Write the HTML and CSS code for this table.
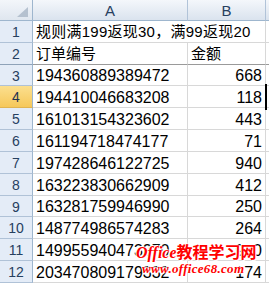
FILE: index.html
```html
<!DOCTYPE html>
<html>
<head>
<meta charset="utf-8">
<link rel="stylesheet" href="styles.css">
</head>
<body>
<div class="sheet">
  <div class="grid">
    <div class="corner"><span class="tri"></span></div>
    <div class="colhead">A</div>
    <div class="colhead">B</div>
    <div class="colhead rest"></div>

    <div class="rowhead">1</div>
    <div class="cell text span2 title">规则满199返现30，满99返现20</div>
    <div class="cell rest"></div>

    <div class="rowhead r2">2</div>
    <div class="cell text r2">订单编号</div>
    <div class="cell text r2">金额</div>
    <div class="cell rest r2"></div>

    <div class="rowhead">3</div><div class="cell num">194360889389472</div><div class="cell num right">668</div><div class="cell rest"></div>
    <div class="rowhead sel">4</div><div class="cell num">194410046683208</div><div class="cell num right">118</div><div class="cell rest"></div>
    <div class="rowhead">5</div><div class="cell num">161013154323602</div><div class="cell num right">443</div><div class="cell rest"></div>
    <div class="rowhead">6</div><div class="cell num">161194718474177</div><div class="cell num right">71</div><div class="cell rest"></div>
    <div class="rowhead">7</div><div class="cell num">197428646122725</div><div class="cell num right">940</div><div class="cell rest"></div>
    <div class="rowhead">8</div><div class="cell num">163223830662909</div><div class="cell num right">412</div><div class="cell rest"></div>
    <div class="rowhead">9</div><div class="cell num">163281759946990</div><div class="cell num right">250</div><div class="cell rest"></div>
    <div class="rowhead">10</div><div class="cell num">148774986574283</div><div class="cell num right">264</div><div class="cell rest"></div>
    <div class="rowhead">11</div><div class="cell num">149955940473270</div><div class="cell num right">970</div><div class="cell rest"></div>
    <div class="rowhead">12</div><div class="cell num">203470809179332</div><div class="cell num right">174</div><div class="cell rest"></div>
  </div>
  <div class="active"></div>
  <div class="watermark">
    <div class="wm1"><span class="wm-latin">Office</span>教程学习网</div>
    <div class="wm2">www.office68.com</div>
  </div>
</div>
</body>
</html>
```
FILE: styles.css
```css
html, body {
  margin: 0;
  padding: 0;
  background: #ffffff;
}
.sheet {
  position: relative;
  width: 269px;
  height: 283px;
  overflow: hidden;
}
.grid {
  display: grid;
  grid-template-columns: 33px 155px 78px 1fr;
  grid-template-rows: 21px 22px 22px 21px 22px 22px 22px 22px 22px 21px 22px 22px 22px;
  width: 269px;
}
.corner {
  position: relative;
  background: linear-gradient(#f3f6fa, #dfe6ef);
  border-right: 1px solid #9eb6ce;
  border-bottom: 1px solid #9eb6ce;
  box-sizing: border-box;
}
.tri {
  position: absolute;
  right: 4px;
  bottom: 3px;
  width: 0;
  height: 0;
  border-left: 11px solid transparent;
  border-bottom: 10px solid #b5c1cf;
}
.colhead {
  background: linear-gradient(#f4f7fb, #dae3ee);
  border-right: 1px solid #b1c3d8;
  border-bottom: 1px solid #9eb6ce;
  box-sizing: border-box;
  font-family: "Liberation Sans", Arial, sans-serif;
  font-size: 15px;
  color: #27405f;
  display: flex;
  align-items: center;
  justify-content: center;
}
.colhead.rest {
  border-right: none;
}
.rowhead {
  background: #e4ecf7;
  border-right: 1px solid #9eb6ce;
  border-bottom: 1px solid #b0c2d7;
  box-sizing: border-box;
  font-family: "Liberation Sans", Arial, sans-serif;
  font-size: 14px;
  color: #27405f;
  display: flex;
  align-items: center;
  justify-content: center;
  padding-top: 1px;
}
.rowhead.sel {
  background: linear-gradient(#fbdf8f, #f6c85a);
  border-bottom-color: #e0b451;
  color: #1f3350;
}
.rowhead.r2 {
  border-bottom-color: #8ea2b8;
}
.cell {
  border-right: 1px solid #d8d8d8;
  border-bottom: 1px solid #d8d8d8;
  box-sizing: border-box;
  display: flex;
  align-items: flex-end;
  padding: 0 3px 0 3px;
  white-space: nowrap;
  overflow: visible;
  color: #000000;
}
.cell.rest {
  border-right: none;
}
.cell.r2 {
  border-bottom-color: #9a9a9a;
}
.span2 {
  grid-column: span 2;
}
.text {
  font-family: "Liberation Sans", "Noto Sans CJK SC", sans-serif;
  font-size: 15px;
  line-height: 19px;
  padding-bottom: 1px;
}
.title {
  letter-spacing: 0.25px;
}
.num {
  font-family: "Liberation Sans", Arial, sans-serif;
  font-size: 16px;
  line-height: 18px;
  padding-left: 3px;
}
.right {
  justify-content: flex-end;
  padding-right: 3px;
}
.active {
  position: absolute;
  left: 265px;
  top: 84px;
  width: 2px;
  height: 26px;
  background: #000000;
}
.watermark {
  position: absolute;
  left: 136px;
  top: 244px;
  color: #ff0000;
  text-shadow: 0 0 2px #ffffff, 0 0 2px #ffffff, 1px 1px 0 #ffffff, -1px -1px 0 #ffffff;
}
.wm1 {
  font-family: "Liberation Serif", "Noto Sans CJK SC", serif;
  font-weight: bold;
  font-size: 16px;
  line-height: 18px;
  white-space: nowrap;
}
.wm1 .wm-latin {
  font-style: italic;
}
.wm2 {
  font-family: "Liberation Serif", serif;
  font-weight: bold;
  font-style: italic;
  font-size: 13px;
  line-height: 14px;
  margin-left: 6px;
  letter-spacing: 0.3px;
  white-space: nowrap;
}
```
